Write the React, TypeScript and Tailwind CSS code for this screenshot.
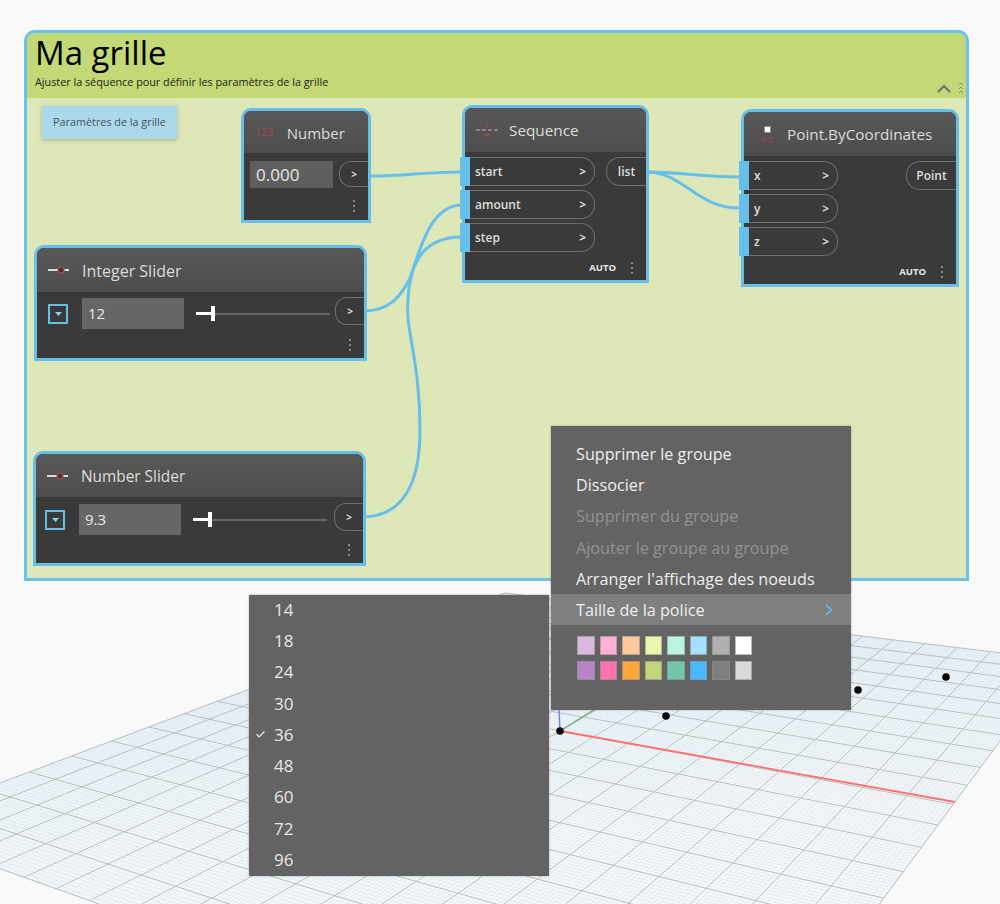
import React from 'react';
import { Check } from 'lucide-react';

const FONT = "font-['Open_Sans',sans-serif]";

// plane corners on screen: far, right, near, left
const QUAD = [
  [505, 593],
  [1060, 660],
  [716.6, 1124],
  [-117, 827],
];

function makeProject() {
  const [[x0, y0], [x1, y1], [x2, y2], [x3, y3]] = QUAD;
  const dx1 = x1 - x2;
  const dx2 = x3 - x2;
  const sx = x0 - x1 + x2 - x3;
  const dy1 = y1 - y2;
  const dy2 = y3 - y2;
  const sy = y0 - y1 + y2 - y3;
  const den = dx1 * dy2 - dx2 * dy1;
  const g = (sx * dy2 - dx2 * sy) / den;
  const h = (dx1 * sy - sx * dy1) / den;
  const a = x1 - x0 + g * x1;
  const b = x3 - x0 + h * x3;
  const d = y1 - y0 + g * y1;
  const e = y3 - y0 + h * y3;
  return (u: number, v: number) => {
    const w = g * u + h * v + 1;
    return [(a * u + b * v + x0) / w, (d * u + e * v + y0) / w];
  };
}

function GridPlane() {
  const p = makeProject();
  const N = 200;
  const minor: string[] = [];
  const major: string[] = [];
  for (let i = 0; i <= N; i++) {
    const t = i / N;
    const [ax, ay] = p(t, 0);
    const [bx, by] = p(t, 1);
    const [cx, cy] = p(0, t);
    const [dx, dy] = p(1, t);
    const seg = `M${ax.toFixed(1)} ${ay.toFixed(1)}L${bx.toFixed(1)} ${by.toFixed(1)}M${cx.toFixed(1)} ${cy.toFixed(1)}L${dx.toFixed(1)} ${dy.toFixed(1)}`;
    if (i % 10 === 0) major.push(seg);
    else minor.push(seg);
  }
  return (
    <svg className="absolute inset-0" width="1000" height="904" viewBox="0 0 1000 904">
      <path d={minor.join('')} stroke="#d3e6f1" strokeWidth="0.55" fill="none" />
      <path d={major.join('')} stroke="#b3bdc1" strokeWidth="1" fill="none" />
      <path d="M560 731L955 802" stroke="#ff6f6f" strokeWidth="1.8" />
      <path d="M560 731L600 706" stroke="#6fb06f" strokeWidth="1.4" />
      <path d="M560 731L559 708" stroke="#7c7cf0" strokeWidth="1.4" />
      <circle cx="560" cy="731" r="3.8" fill="#0a0a0a" />
      <circle cx="666" cy="716" r="3.8" fill="#0a0a0a" />
      <circle cx="858" cy="690" r="3.8" fill="#0a0a0a" />
      <circle cx="946" cy="677" r="3.8" fill="#0a0a0a" />
    </svg>
  );
}

function Wires() {
  return (
    <svg className="absolute inset-0" width="1000" height="904" viewBox="0 0 1000 904" fill="none" stroke="#68c0ea" strokeWidth="3">
      <path d="M368 176C405 176 425 172 462 172" />
      <path d="M364 311C390 311 402 295 410 278C420 250 430 205 462 205" />
      <path d="M362 517C405 517 420 480 420 430C420 360 405 330 408 300C410 260 425 237 462 237" />
      <path d="M646 172C680 172 700 177 740 177" />
      <path d="M646 172C685 172 695 208 740 208" />
    </svg>
  );
}

function Dots() {
  return (
    <div className="flex flex-col gap-[3px]">
      <span className="h-[2px] w-[2px] bg-[#8c8c8c]" />
      <span className="h-[2px] w-[2px] bg-[#8c8c8c]" />
      <span className="h-[2px] w-[2px] bg-[#8c8c8c]" />
    </div>
  );
}

function Node({
  className,
  headerClass,
  icon,
  title,
  children,
}: {
  className: string;
  headerClass: string;
  icon: React.ReactNode;
  title: string;
  children: React.ReactNode;
}) {
  return (
    <div className={`absolute flex flex-col rounded-t-[10px] border-[3px] border-[#66bfe9] bg-[#3a3a3a] ${className}`}>
      <div className={`flex shrink-0 items-center rounded-t-[7px] bg-gradient-to-b from-[#585858] to-[#4d4d4d] ${headerClass}`}>
        {icon}
        <span className="mt-[2px] leading-none text-[#dcdcdc]">{title}</span>
      </div>
      {children}
    </div>
  );
}

function InPort({ label, className }: { label: string; className: string }) {
  return (
    <div className="-ml-[5px] flex">
      <div className="w-[10px] bg-[#66bfe9]" />
      <div className={`flex items-center justify-between rounded-r-[14px] border border-l-0 border-[#6e6e6e] pl-[5px] pr-[8px] text-[12px] font-semibold text-[#dedede] ${className}`}>
        <span>{label}</span>
        <span className="font-bold">&gt;</span>
      </div>
    </div>
  );
}

function OutPort({ label, className }: { label: string; className: string }) {
  return (
    <div className={`flex items-center justify-center rounded-l-[14px] border border-r-0 border-[#6e6e6e] text-[12px] font-semibold text-[#dedede] ${className}`}>
      {label}
    </div>
  );
}

function Footer({ auto, className }: { auto?: boolean; className: string }) {
  return (
    <div className={`mt-auto flex items-center justify-end ${className}`}>
      {auto && <span className="mr-[15px] text-[9.5px] font-bold text-[#e6e6e6]">AUTO</span>}
      <Dots />
    </div>
  );
}

function SliderIcon() {
  return (
    <svg className="mr-[12px] shrink-0" width="22" height="10" viewBox="0 0 22 10">
      <path d="M0 5H21" stroke="#d9d9d9" strokeWidth="2" />
      <circle cx="13" cy="5" r="3" fill="#3a3a3a" stroke="#b5474c" strokeWidth="1.2" />
    </svg>
  );
}

function SliderRow({ value, boxClass }: { value: string; boxClass: string }) {
  return (
    <div className={`flex h-[33px] items-center ${boxClass}`}>
      <div className="flex h-[20px] w-[20px] items-center justify-center border-2 border-[#66bfe9]">
        <svg width="7" height="4" viewBox="0 0 7 4">
          <path d="M0 0H7L3.5 4Z" fill="#7fd0f5" />
        </svg>
      </div>
      <div className="ml-[14px] flex h-[31px] w-[102px] items-center bg-[#666666] pl-[6px] text-[15px] text-[#ececec]">{value}</div>
      <div className="ml-[12px] flex w-[134px] items-center">
        <div className="h-[3px] w-[15px] bg-white" />
        <div className="h-[15px] w-[4px] bg-white" />
        <div className="h-[2px] flex-1 bg-[#656565]" />
      </div>
      <div className="mb-[5px] ml-auto flex h-[28px] w-[29px] items-center justify-center rounded-l-[12px] border border-r-0 border-[#6e6e6e] text-[10px] font-bold text-[#dedede]">
        &gt;
      </div>
    </div>
  );
}

function NodeGraph() {
  return (
    <>
      <Node
        className="left-[241px] top-[108px] h-[115px] w-[130px]"
        headerClass="h-[42px] pl-[11px] text-[15px]"
        icon={<span className="mr-[13px] text-[10px] tracking-[0.5px] text-[#a5474c]">123</span>}
        title="Number"
      >
        <div className="mt-[8px] flex items-start pl-[6px]">
          <div className="flex h-[27px] w-[83px] items-center bg-[#5e5e5e] pl-[6px] text-[17px] text-[#e8e8e8]">0.000</div>
          <div className="ml-[6px] flex h-[26px] flex-1 items-center justify-center rounded-l-[12px] border border-r-0 border-[#6e6e6e] text-[10px] font-bold text-[#dedede]">
            &gt;
          </div>
        </div>
        <Footer className="h-[30px] pt-[2px] pr-[13px]" />
      </Node>

      <Node
        className="left-[462px] top-[105px] h-[178px] w-[187px]"
        headerClass="h-[44px] pl-[10px] text-[15.3px]"
        icon={
          <svg className="mr-[10px] shrink-0" width="24" height="14" viewBox="0 0 24 14">
            <path d="M1 7H23" stroke="#b8b8b8" strokeWidth="1" strokeDasharray="4 2" />
            <path d="M12 2V4M9 12H15" stroke="#b5474c" strokeWidth="1.5" />
          </svg>
        }
        title="Sequence"
      >
        <div className="mt-[5px] flex justify-between">
          <div className="flex flex-col gap-[4px]">
            <InPort label="start" className="h-[29px] w-[125px]" />
            <InPort label="amount" className="h-[29px] w-[125px]" />
            <InPort label="step" className="h-[29px] w-[125px]" />
          </div>
          <OutPort label="list" className="h-[29px] w-[40px]" />
        </div>
        <Footer auto className="h-[30px] pt-[4px] pr-[13px]" />
      </Node>

      <Node
        className="left-[741px] top-[109px] h-[178px] w-[218px]"
        headerClass="h-[44px] pl-[14px] text-[15.3px]"
        icon={
          <div className="mr-[11px] flex w-[18px] shrink-0 flex-col items-center gap-[3px]">
            <span className="h-[7px] w-[7px] border border-[#8a8a8a] bg-white" />
            <span className="text-[7px] leading-none text-[#a5474c]">XYZ</span>
          </div>
        }
        title="Point.ByCoordinates"
      >
        <div className="mt-[5px] flex justify-between">
          <div className="flex flex-col gap-[4px]">
            <InPort label="x" className="h-[29px] w-[89px]" />
            <InPort label="y" className="h-[29px] w-[89px]" />
            <InPort label="z" className="h-[29px] w-[89px]" />
          </div>
          <OutPort label="Point" className="h-[29px] w-[50px]" />
        </div>
        <Footer auto className="h-[30px] pt-[4px] pr-[13px]" />
      </Node>

      <Node
        className="left-[34px] top-[245px] h-[116px] w-[333px]"
        headerClass="h-[44px] pl-[11px] text-[16px]"
        icon={<SliderIcon />}
        title="Integer Slider"
      >
        <div className="mt-[5px]">
          <SliderRow value="12" boxClass="pl-[11px]" />
        </div>
        <Footer className="h-[26px] pr-[13px]" />
      </Node>

      <Node
        className="left-[33px] top-[451px] h-[115px] w-[333px]"
        headerClass="h-[43px] pl-[11px] text-[15.4px]"
        icon={<SliderIcon />}
        title="Number Slider"
      >
        <div className="mt-[6px]">
          <SliderRow value="9.3" boxClass="pl-[9px]" />
        </div>
        <Footer className="h-[26px] pr-[13px]" />
      </Node>
    </>
  );
}

function GroupFrame() {
  return (
    <div className="absolute left-[24px] top-[30px] flex h-[551px] w-[945px] flex-col overflow-hidden rounded-t-[11px] border-[3px] border-[#6cc2ec] bg-[#dde7b8]">
      <div className="relative h-[65px] shrink-0 bg-[#c3d877] pl-[8px] text-black">
        <div className="pt-[1px] text-[33px] leading-[38px]">Ma grille</div>
        <div className="mt-[3px] text-[10.8px] leading-[14px] text-[#20241a]">Ajuster la séquence pour définir les paramètres de la grille</div>
        <svg className="absolute right-[2px] top-[48px]" width="28" height="14" viewBox="0 0 28 14" fill="none">
          <path d="M2 11L8 5L14 11" stroke="#6a7078" strokeWidth="2" />
          <path d="M23 4L25 2L27 4M23 8L25 6L27 8M23 12L25 10L27 12" stroke="#8a9070" strokeWidth="1" />
        </svg>
      </div>
      <div className="relative flex-1">
        <div className="absolute left-[15px] top-[8px] flex h-[33px] w-[135px] items-center justify-center bg-[#abd9ea] text-[10.8px] text-[#46535c] shadow-[0_1px_4px_rgba(0,0,0,0.25)]">
          Paramètres de la grille
        </div>
      </div>
    </div>
  );
}

const MENU_ITEMS = [
  { label: 'Supprimer le groupe', dim: false },
  { label: 'Dissocier', dim: false },
  { label: 'Supprimer du groupe', dim: true },
  { label: 'Ajouter le groupe au groupe', dim: true },
  { label: "Arranger l'affichage des noeuds", dim: false },
];

const SWATCHES = [
  'bg-[#d8b8de]',
  'bg-[#ffb0d4]',
  'bg-[#ffc999]',
  'bg-[#e8f7ad]',
  'bg-[#b9f5de]',
  'bg-[#a4dfff]',
  'bg-[#b0b0b0]',
  'bg-[#ffffff]',
  'bg-[#b784c4]',
  'bg-[#ff72ad]',
  'bg-[#ffa63d]',
  'bg-[#c1d676]',
  'bg-[#71c6a8]',
  'bg-[#48b8ff]',
  'bg-[#7f7f7f]',
  'bg-[#d9d9d9]',
];

function ContextMenu() {
  return (
    <div className="absolute left-[551px] top-[426px] h-[284px] w-[300px] bg-[#636363] pt-[12.5px] shadow-[0_0_2px_rgba(0,0,0,0.3)]">
      {MENU_ITEMS.map((item) => (
        <div
          key={item.label}
          className={`flex h-[31.2px] items-center pl-[25px] text-[16.2px] font-medium ${item.dim ? 'text-[#939393]' : 'text-[#efefef]'}`}
        >
          {item.label}
        </div>
      ))}
      <div className="flex h-[31px] items-center justify-between bg-[#7f7f7f] pl-[25px] pr-[18px] text-[16.2px] font-medium text-[#efefef]">
        <span>Taille de la police</span>
        <svg width="8" height="12" viewBox="0 0 8 12" fill="none">
          <path d="M1 1L6.5 6L1 11" stroke="#5cb9e6" strokeWidth="1.8" />
        </svg>
      </div>
      <div className="ml-[26px] mt-[11px] grid w-[175px] grid-cols-8 gap-x-[5px] gap-y-[6px]">
        {SWATCHES.map((c, i) => (
          <div key={i} className={`h-[19px] w-[17.5px] border-[1.5px] border-[#8a8a8a]/60 ${c}`} />
        ))}
      </div>
    </div>
  );
}

const SIZES = ['14', '18', '24', '30', '36', '48', '60', '72', '96'];

function SizeMenu() {
  return (
    <div className="absolute left-[249px] top-[595px] h-[281px] w-[300px] bg-[#636363] shadow-[0_0_2px_rgba(0,0,0,0.3)]">
      <div className="-mt-[1px]">
        {SIZES.map((s) => (
          <div key={s} className="flex h-[31.25px] items-center text-[17px] text-[#e8e8e8]">
            <div className="flex w-[25px] justify-center">{s === '36' && <Check size={11} strokeWidth={2.5} className="-ml-[3px] text-[#eeeeee]" />}</div>
            {s}
          </div>
        ))}
      </div>
    </div>
  );
}

export default function App() {
  return (
    <div className={`relative h-[904px] w-[1000px] overflow-hidden bg-[#f9f9f9] ${FONT}`}>
      <GridPlane />
      <GroupFrame />
      <Wires />
      <NodeGraph />
      <ContextMenu />
      <SizeMenu />
    </div>
  );
}
